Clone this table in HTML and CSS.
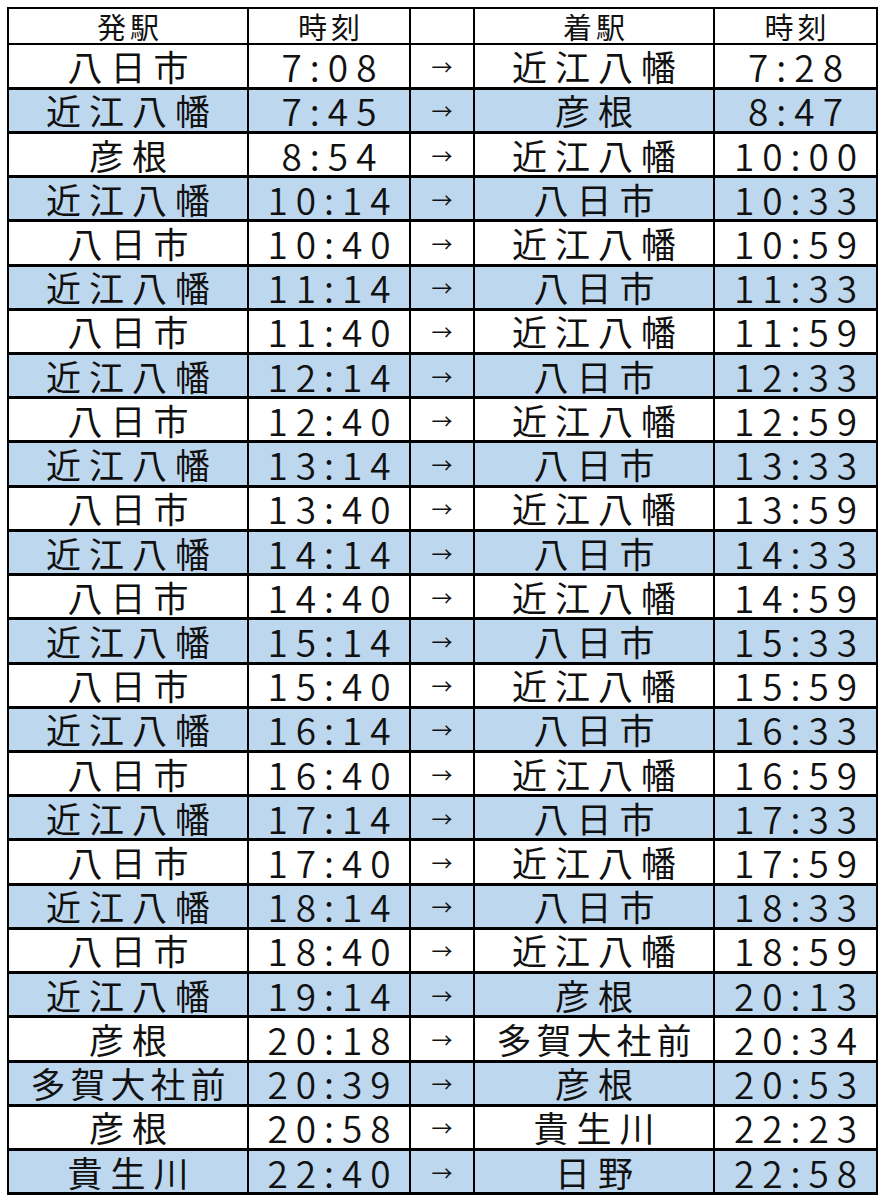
FILE: index.html
```html
<!DOCTYPE html>
<html lang="ja">
<head>
<meta charset="utf-8">
<title>時刻表</title>
<link rel="stylesheet" href="styles.css">
</head>
<body>
<table class="timetable">
<colgroup>
<col class="c-st"><col class="c-tm"><col class="c-ar"><col class="c-st"><col class="c-tm2">
</colgroup>
<thead>
<tr class="head"><th>発駅</th><th>時刻</th><th></th><th>着駅</th><th>時刻</th></tr>
</thead>
<tbody>
<tr><td class="st">八日市</td><td class="tm">7:08</td><td class="ar">→</td><td class="st">近江八幡</td><td class="tm">7:28</td></tr>
<tr class="alt"><td class="st">近江八幡</td><td class="tm">7:45</td><td class="ar">→</td><td class="st">彦根</td><td class="tm">8:47</td></tr>
<tr><td class="st">彦根</td><td class="tm">8:54</td><td class="ar">→</td><td class="st">近江八幡</td><td class="tm">10:00</td></tr>
<tr class="alt"><td class="st">近江八幡</td><td class="tm">10:14</td><td class="ar">→</td><td class="st">八日市</td><td class="tm">10:33</td></tr>
<tr><td class="st">八日市</td><td class="tm">10:40</td><td class="ar">→</td><td class="st">近江八幡</td><td class="tm">10:59</td></tr>
<tr class="alt"><td class="st">近江八幡</td><td class="tm">11:14</td><td class="ar">→</td><td class="st">八日市</td><td class="tm">11:33</td></tr>
<tr><td class="st">八日市</td><td class="tm">11:40</td><td class="ar">→</td><td class="st">近江八幡</td><td class="tm">11:59</td></tr>
<tr class="alt"><td class="st">近江八幡</td><td class="tm">12:14</td><td class="ar">→</td><td class="st">八日市</td><td class="tm">12:33</td></tr>
<tr><td class="st">八日市</td><td class="tm">12:40</td><td class="ar">→</td><td class="st">近江八幡</td><td class="tm">12:59</td></tr>
<tr class="alt"><td class="st">近江八幡</td><td class="tm">13:14</td><td class="ar">→</td><td class="st">八日市</td><td class="tm">13:33</td></tr>
<tr><td class="st">八日市</td><td class="tm">13:40</td><td class="ar">→</td><td class="st">近江八幡</td><td class="tm">13:59</td></tr>
<tr class="alt"><td class="st">近江八幡</td><td class="tm">14:14</td><td class="ar">→</td><td class="st">八日市</td><td class="tm">14:33</td></tr>
<tr><td class="st">八日市</td><td class="tm">14:40</td><td class="ar">→</td><td class="st">近江八幡</td><td class="tm">14:59</td></tr>
<tr class="alt"><td class="st">近江八幡</td><td class="tm">15:14</td><td class="ar">→</td><td class="st">八日市</td><td class="tm">15:33</td></tr>
<tr><td class="st">八日市</td><td class="tm">15:40</td><td class="ar">→</td><td class="st">近江八幡</td><td class="tm">15:59</td></tr>
<tr class="alt"><td class="st">近江八幡</td><td class="tm">16:14</td><td class="ar">→</td><td class="st">八日市</td><td class="tm">16:33</td></tr>
<tr><td class="st">八日市</td><td class="tm">16:40</td><td class="ar">→</td><td class="st">近江八幡</td><td class="tm">16:59</td></tr>
<tr class="alt"><td class="st">近江八幡</td><td class="tm">17:14</td><td class="ar">→</td><td class="st">八日市</td><td class="tm">17:33</td></tr>
<tr><td class="st">八日市</td><td class="tm">17:40</td><td class="ar">→</td><td class="st">近江八幡</td><td class="tm">17:59</td></tr>
<tr class="alt"><td class="st">近江八幡</td><td class="tm">18:14</td><td class="ar">→</td><td class="st">八日市</td><td class="tm">18:33</td></tr>
<tr><td class="st">八日市</td><td class="tm">18:40</td><td class="ar">→</td><td class="st">近江八幡</td><td class="tm">18:59</td></tr>
<tr class="alt"><td class="st">近江八幡</td><td class="tm">19:14</td><td class="ar">→</td><td class="st">彦根</td><td class="tm">20:13</td></tr>
<tr><td class="st">彦根</td><td class="tm">20:18</td><td class="ar">→</td><td class="st st5">多賀大社前</td><td class="tm">20:34</td></tr>
<tr class="alt"><td class="st st5">多賀大社前</td><td class="tm">20:39</td><td class="ar">→</td><td class="st">彦根</td><td class="tm">20:53</td></tr>
<tr><td class="st">彦根</td><td class="tm">20:58</td><td class="ar">→</td><td class="st">貴生川</td><td class="tm">22:23</td></tr>
<tr class="alt"><td class="st">貴生川</td><td class="tm">22:40</td><td class="ar">→</td><td class="st">日野</td><td class="tm">22:58</td></tr>
</tbody>
</table>
</body>
</html>
```

FILE: styles.css
```css
html, body {
  margin: 0;
  padding: 0;
  background: #ffffff;
}

body {
  padding: 7px 0 0 7px;
  font-family: "Noto Sans CJK JP", "Noto Sans", sans-serif;
  color: #111111;
}

.timetable {
  border-collapse: collapse;
  table-layout: fixed;
  width: 869px;
  border: 2px solid #000000;
}

.c-st { width: 240px; }
.c-tm { width: 162px; }
.c-ar { width: 64px; }
.c-tm2 { width: 163px; }

.timetable th,
.timetable td {
  border-left: 2px solid #000000;
  border-right: 2px solid #000000;
  border-bottom: 3px solid #000000;
  padding: 0;
  text-align: center;
  vertical-align: middle;
  white-space: nowrap;
}

.head {
  height: 36px;
}

.head th {
  font-weight: 400;
  font-size: 29px;
  line-height: 30px;
  letter-spacing: 4px;
  text-indent: 4px;
  border-bottom-width: 2px;
}

tbody tr {
  height: 44.23px;
}

tbody tr.alt {
  background: #bdd7ee;
}

.st {
  font-size: 35px;
  line-height: 40px;
  letter-spacing: 8px;
  text-indent: 8px;
}

.st5 {
  letter-spacing: 5px;
  text-indent: 5px;
}

.tm {
  font-size: 37px;
  font-weight: 350;
  line-height: 40px;
  letter-spacing: 8px;
  text-indent: 8px;
  padding-top: 3px;
}

.ar {
  font-size: 21px;
  line-height: 24px;
}
```
